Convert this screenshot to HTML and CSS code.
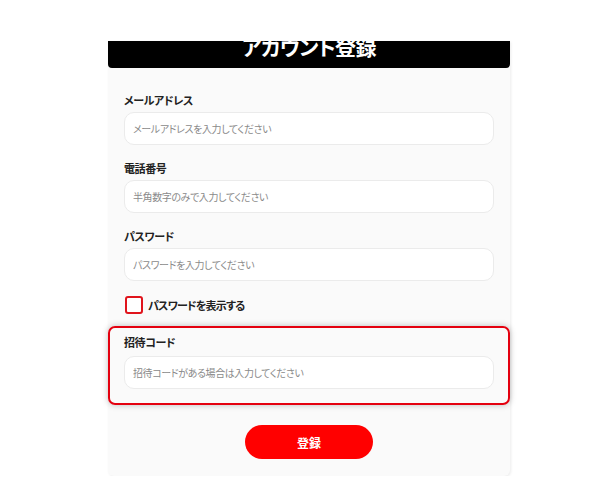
FILE: index.html
```html
<!DOCTYPE html>
<html lang="ja">
  <head>
    <meta charset="UTF-8" />
    <title>アカウント登録</title>
    <link rel="stylesheet" href="styles.css">
  </head>

  <body>
    <div class="card">
      <!-- タイトル -->
      <div class="head">
        <h1>アカウント登録</h1>
      </div>

      <form class="form">
        <div class="field">
          <label>メールアドレス</label>
          <input type="text" placeholder="メールアドレスを入力してください" />
        </div>
        <div class="field">
          <label>電話番号</label>
          <input type="text" placeholder="半角数字のみで入力してください" />
        </div>
        <div class="field">
          <label>パスワード</label>
          <input type="password" placeholder="パスワードを入力してください" />
        </div>
        <div class="check">
          <span class="box"></span>
          <span>パスワードを表示する</span>
        </div>
        <div class="field invite">
          <label>招待コード</label>
          <input type="text" placeholder="招待コードがある場合は入力してください" />
        </div>
        <div class="submit">
          <button type="button">登録</button>
        </div>
      </form>
    </div>
  </body>
</html>
```

FILE: styles.css
```css
body {
  margin: 0;
  padding: 0;
  background-color: #fff;
  font-family: "Noto Sans CJK JP", "Noto Sans", sans-serif;
  font-feature-settings: "palt";
  color: #222;
}

.card {
  width: 402px;
  margin: 41px 0 0 108px;
  background-color: #fafafa;
  border-radius: 0 0 6px 6px;
  box-shadow: 1px 1px 3px rgba(0, 0, 0, 0.08);
}

.head {
  height: 27px;
  overflow: hidden;
  background-color: #000;
  border-radius: 0 0 4px 4px;
}

.head h1 {
  margin: -10px 0 0;
  font-size: 21px;
  line-height: 30px;
  font-weight: bold;
  letter-spacing: -0.5px;
  color: #fff;
  text-align: center;
}

.form {
  padding: 24px 16px 17px;
}

.field label {
  display: block;
  font-size: 11px;
  line-height: 16px;
  font-weight: bold;
  letter-spacing: -0.4px;
}

.field input {
  display: block;
  width: 100%;
  height: 33px;
  margin: 4px 0 15px;
  padding: 0 8px;
  box-sizing: border-box;
  border: 1px solid #ebebeb;
  border-radius: 10px;
  background-color: #fff;
  outline: none;
  font-family: inherit;
  font-feature-settings: "palt";
  font-size: 10px;
  letter-spacing: -0.4px;
}

.field input::placeholder {
  color: #8a8a8a;
}

.check {
  display: flex;
  align-items: center;
  gap: 5px;
  margin: 0 0 12px 1px;
  font-size: 11px;
  font-weight: bold;
  letter-spacing: -0.8px;
}

.check .box {
  width: 18px;
  height: 18px;
  box-sizing: border-box;
  border: 2px solid #e0141c;
  border-radius: 3px;
  background-color: #fff;
}

.invite {
  margin: 0 -16px;
  padding: 6px 14px 0;
  border: 2px solid #e4000f;
  border-radius: 7px;
  box-shadow: 0 0 6px rgba(0, 0, 0, 0.25);
}

.invite input {
  margin: 6px 0 14px;
}

.submit {
  display: flex;
  justify-content: center;
  padding-top: 20px;
}

.submit button {
  width: 128px;
  height: 34px;
  border: none;
  border-radius: 17px;
  background-color: #ff0000;
  color: #fff;
  font-family: inherit;
  font-size: 12px;
  font-weight: bold;
}
```
